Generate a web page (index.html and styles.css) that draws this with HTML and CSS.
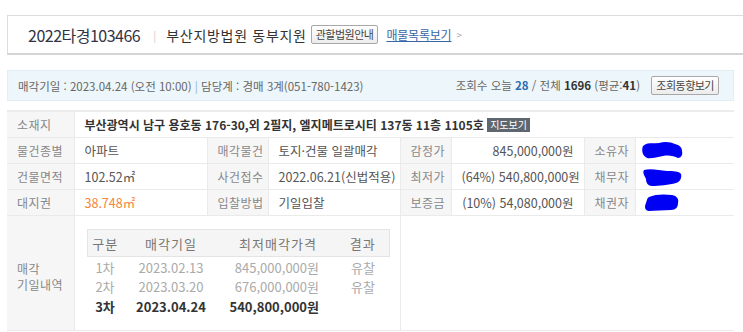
FILE: index.html
```html
<!DOCTYPE html>
<html lang="ko">
<head>
    <meta charset="UTF-8">
    <meta name="viewport" content="width=device-width, initial-scale=1.0">
    <title>2022타경103466</title>
    <link rel="stylesheet" href="styles.css">
</head>
<body>
    <div class="case-head">
        <span class="case-no">2022타경103466</span>
        <span class="sep">|</span>
        <span class="court">부산지방법원 동부지원</span>
        <button class="btn">관할법원안내</button>
        <a class="list-link" href="#">매물목록보기</a>
        <span class="arrow">&gt;</span>
    </div>

    <div class="info-bar">
        <div class="info-left">
            매각기일 : 2023.04.24 (오전 10:00) <span class="bar">|</span> 담당계 : 경매 3계(051-780-1423)
        </div>
        <div class="info-right">
            조회수 오늘 <b class="blue">28</b> / 전체 <b>1696</b> (평균:<b>41</b>)
            <button class="btn">조회동향보기</button>
        </div>
    </div>

    <table class="detail">
        <colgroup>
            <col style="width:67px">
            <col style="width:133px">
            <col style="width:61px">
            <col style="width:132px">
            <col style="width:51px">
            <col style="width:133px">
            <col style="width:51px">
            <col style="width:99px">
        </colgroup>
        <tr>
            <th>소재지</th>
            <td colspan="7" class="addr">부산광역시 남구 용호동 176-30,외 2필지, 엘지메트로시티 137동 11층 1105호 <span class="map">지도보기</span></td>
        </tr>
        <tr>
            <th>물건종별</th>
            <td>아파트</td>
            <th>매각물건</th>
            <td>토지·건물 일괄매각</td>
            <th>감정가</th>
            <td class="num">845,000,000원</td>
            <th>소유자</th>
            <td class="hidden">
                <svg width="44" height="20" viewBox="0 0 44 20"><path d="M2 5 C6 1 12 3 18 2 C24 0 30 1 34 3 C38 4 41 6 41 10 C42 14 40 17 37 17 C33 15 28 14 22 15 C16 16 10 18 6 17 C2 15 0 10 2 5 Z" fill="#0000f5"/></svg>
            </td>
        </tr>
        <tr>
            <th>건물면적</th>
            <td>102.52㎡</td>
            <th>사건접수</th>
            <td>2022.06.21(신법적용)</td>
            <th>최저가</th>
            <td class="num">(64%) 540,800,000원</td>
            <th>채무자</th>
            <td class="hidden">
                <svg width="44" height="20" viewBox="0 0 44 20"><path d="M3 3 C9 1 18 3 26 4 C32 4 38 4 40 7 C41 11 39 15 35 16 C28 18 18 19 11 19 C7 19 5 16 5 12 C4 9 1 6 3 3 Z" fill="#0000f5"/></svg>
            </td>
        </tr>
        <tr>
            <th>대지권</th>
            <td class="orange">38.748㎡</td>
            <th>입찰방법</th>
            <td>기일입찰</td>
            <th>보증금</th>
            <td class="num">(10%) 54,080,000원</td>
            <th>채권자</th>
            <td class="hidden">
                <svg width="44" height="20" viewBox="0 0 44 20"><path d="M8 4 C14 1 24 1 31 2 C36 3 38 6 37 10 C37 14 35 17 30 17 C22 17 14 18 8 18 C4 18 3 14 5 10 C6 7 6 5 8 4 Z" fill="#0000f5"/></svg>
            </td>
        </tr>
        <tr class="history-row">
            <th class="history-label">매각<br>기일내역</th>
            <td colspan="3" class="history-cell">
                <table class="history">
                    <colgroup>
                        <col style="width:36px">
                        <col style="width:96px">
                        <col style="width:118px">
                        <col style="width:52px">
                    </colgroup>
                    <tr class="history-head">
                        <th>구분</th>
                        <th>매각기일</th>
                        <th>최저매각가격</th>
                        <th>결과</th>
                    </tr>
                    <tr class="past first">
                        <td>1차</td>
                        <td>2023.02.13</td>
                        <td class="price">845,000,000원</td>
                        <td>유찰</td>
                    </tr>
                    <tr class="past">
                        <td>2차</td>
                        <td>2023.03.20</td>
                        <td class="price">676,000,000원</td>
                        <td>유찰</td>
                    </tr>
                    <tr class="current">
                        <td>3차</td>
                        <td>2023.04.24</td>
                        <td class="price">540,800,000원</td>
                        <td></td>
                    </tr>
                </table>
            </td>
            <td colspan="4"></td>
        </tr>
    </table>
</body>
</html>
```

FILE: styles.css
```css
body {
    margin: 0;
    background: #fff;
    font-family: "Noto Sans CJK KR", "Noto Sans", sans-serif;
    color: #444;
    overflow: hidden;
}
.case-head {
    display: flex;
    align-items: center;
    margin: 15px 0 0 7px;
    width: 800px;
    height: 40px;
    border: 1px solid #dcdcdc;
    border-bottom: 2px solid #d4d4d4;
    padding-left: 20px;
    box-sizing: border-box;
    white-space: nowrap;
}
.case-no {
    font-size: 16px;
    color: #333344;
    letter-spacing: -0.5px;
}
.sep {
    color: #ccc;
    font-size: 11px;
    margin: 0 10px 0 13px;
}
.court {
    font-size: 14px;
    color: #333;
    letter-spacing: 0.7px;
}
.btn {
    font-family: "Noto Sans CJK KR", sans-serif;
    font-size: 11px;
    color: #444;
    height: 19px;
    padding: 0 4px;
    line-height: 15px;
    border: 1px solid #a8a8a8;
    border-radius: 2px;
    background: linear-gradient(#fff, #ececec);
    letter-spacing: -0.5px;
}
.case-head .btn {
    margin-left: 4px;
}
.list-link {
    margin-left: 8px;
    font-size: 12px;
    color: #3a66a8;
    text-decoration: underline;
    letter-spacing: -0.2px;
}
.arrow {
    margin-left: 5px;
    font-size: 10px;
    color: #aaa;
}
.info-bar {
    display: flex;
    justify-content: space-between;
    align-items: center;
    margin: 15px 0 0 7px;
    width: 727px;
    height: 31px;
    background: #edf6fa;
    border: 1px solid #e2eef4;
    box-sizing: border-box;
    padding: 0 14px 0 10px;
    font-size: 11.5px;
    color: #666;
    white-space: nowrap;
}
.info-bar .bar {
    color: #8ab6d6;
}
.info-right b {
    color: #333;
}
.info-right b.blue {
    color: #2b6cb5;
}
.info-right .btn {
    margin-left: 8px;
}
.detail {
    margin: 9px 0 0 7px;
    width: 727px;
    border-collapse: collapse;
    table-layout: fixed;
    border-top: 2px solid #ececec;
    font-size: 12.5px;
    white-space: nowrap;
}
.detail > tbody > tr > th,
.detail > tbody > tr > td {
    height: 25px;
    border-bottom: 1px solid #eaeaea;
    padding: 0 10px;
    text-align: left;
    font-weight: normal;
    overflow: hidden;
}
.detail > tbody > tr > th {
    background: #f6f6f6;
    color: #888;
    font-size: 12px;
    letter-spacing: 0.5px;
}
.detail > tbody > tr > td {
    color: #555;
    border-left: 1px solid #eaeaea;
}
.detail > tbody > tr > td + th {
    border-left: 1px solid #eaeaea;
}
.detail .addr {
    font-weight: bold;
    font-size: 12px;
    color: #333;
}
.map {
    display: inline-block;
    background: #5e676f;
    color: #fff;
    font-size: 10px;
    font-weight: normal;
    padding: 0 3px;
    line-height: 14px;
    vertical-align: 1px;
}
.detail .num {
    text-align: right;
}
.detail .orange {
    color: #f5853c;
}
.detail .hidden {
    padding: 0 0 0 5px;
}
.hidden svg {
    display: block;
}
.detail > tbody > tr.history-row {
    height: 115px;
}
.detail .history-row > th,
.detail .history-row > td {
    height: auto;
    vertical-align: top;
}
.detail .history-row > th.history-label {
    vertical-align: middle;
    line-height: 16px;
    padding-top: 7px;
}
.detail .history-row > td.history-cell {
    padding: 13px 11px 0 12px;
}
.history {
    width: 302px;
    border-collapse: collapse;
    table-layout: fixed;
    font-size: 13px;
}
.history-head th {
    height: 26px;
    padding: 0;
    text-align: center;
    background: #f5f5f5;
    border-top: 1px solid #e4e4e4;
    border-bottom: 1px solid #e4e4e4;
    color: #777;
    font-weight: normal;
    letter-spacing: 1px;
}
.history-head th:first-child {
    border-left: 1px solid #e4e4e4;
}
.history-head th:last-child {
    border-right: 1px solid #e4e4e4;
}
.history td {
    text-align: center;
    height: 19px;
    line-height: 19px;
    padding: 0;
}
.history tr.first td {
    padding-top: 1px;
}
.history tr.current td {
    padding-top: 1px;
}
.history td.price {
    text-align: right;
    padding-right: 18px;
}
.history .past td {
    color: #aaa;
}
.history .current td {
    color: #333;
    font-weight: bold;
}
```
